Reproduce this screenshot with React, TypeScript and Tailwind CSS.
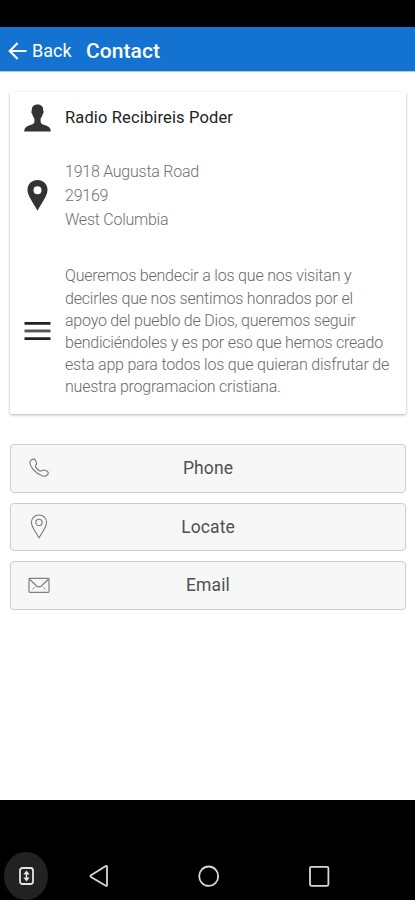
import React from "react";

const about: { text: string; spacing: string }[] = [
  { text: "Queremos bendecir a los que nos visitan y", spacing: "tracking-[-0.2px]" },
  { text: "decirles que nos sentimos honrados por el", spacing: "tracking-[-0.2px]" },
  { text: "apoyo del pueblo de Dios, queremos seguir", spacing: "tracking-[-0.22px]" },
  { text: "bendiciéndoles y es por eso que hemos creado", spacing: "tracking-[-0.22px]" },
  { text: "esta app para todos los que quieran disfrutar de", spacing: "tracking-[-0.2px]" },
  { text: "nuestra programacion cristiana.", spacing: "tracking-[-0.22px]" },
];

function PersonIcon() {
  return (
    <svg className="h-7 w-[27px]" viewBox="0 0 27 28" fill="#333335">
      <path d="M13.5 0.5C9.4 0.5 7.6 3 7.8 6.5c-.7.4-.5 3.1.6 3.8.3 2.1 1.2 3.4 2 4.2v3.7c-.6 2.2-3.2 2.5-6 3.5C1.300 22.800.300 24.500.2 27.500h26.600c-.1-3-1.100-4.700-4.200-5.800-2.800-1-5.400-1.300-6-3.500v-3.700c.8-.8 1.700-2.100 2-4.200 1.100-.7 1.300-3.400.6-3.800.2-3.500-1.600-6-5.700-6z" />
    </svg>
  );
}

function PinIcon() {
  return (
    <svg className="h-[31px] w-[21px]" viewBox="0 0 21 31">
      <path fillRule="evenodd" fill="#333335" d="M10.500 0C4.700 0 .5 4.300.5 9.700c0 6.300 6.200 13.600 10 21.100 3.800-7.500 10-14.800 10-21.100C20.500 4.300 16.300 0 10.500 0zm0 6.200a4 4 0 1 1 0 8 4 4 0 0 1 0-8z" />
    </svg>
  );
}

function MenuIcon() {
  return (
    <svg className="h-[18px] w-[27px]" viewBox="0 0 27 18">
      <path fill="#222224" d="M.5 0h26v2.700H.5zM.5 15.200h26v2.700H.5z" />
      <path fill="#555558" d="M.5 7.500h26v2.900H.5z" />
    </svg>
  );
}

function PhoneIcon() {
  return (
    <svg className="h-5 w-5" viewBox="0 0 20 20" fill="none" stroke="#77777a" strokeWidth="1.100" strokeLinejoin="round">
      <path d="M2.200 2.100C3.600.8 5.500.8 6.300 2.200l.9 1.800c.6 1.200.4 2.100-.3 2.900-.7.800-.6 1.400-.1 2.200.9 1.500 2.100 2.700 3.600 3.600.8.500 1.500.6 2.200 0 .8-.7 1.600-.8 2.600-.5l2.600.9c1.500.6 1.800 2 1 3.300-1.100 1.700-3 2.200-5.200 1.500C10 16.600 6.700 14.500 4 11.300 2.300 9.200 1.200 7 .9 5 .8 3.700 1.200 2.900 2.200 2.100z" />
    </svg>
  );
}

function LocateIcon() {
  return (
    <svg className="h-[25px] w-[18px]" viewBox="0 0 18 25" fill="none" stroke="#77777a" strokeWidth="1.100">
      <path d="M9 1C4.600 1 1.400 4.300 1.400 8.500c0 4.500 4.600 10 7.600 15.300 3-5.300 7.600-10.800 7.600-15.300C16.600 4.300 13.400 1 9 1z" />
      <circle cx="9" cy="8.400" r="3.100" />
    </svg>
  );
}

function EmailIcon() {
  return (
    <svg className="h-[17px] w-[22px]" viewBox="0 0 22 17" fill="none" stroke="#808083" strokeWidth="1.200">
      <rect x="1" y="1.300" width="20" height="14" rx="0.800" />
      <path d="M1.500 2.200 8.700 9c1.400 1.200 3.200 1.200 4.600 0L20.500 2.200" />
      <path d="M4.500 12.500 7.300 9.500M17.500 12.500 14.700 9.500" strokeWidth="0.800" />
    </svg>
  );
}

function ActionButton({ label, icon }: { label: string; icon: React.ReactNode }) {
  return (
    <button className="grid h-[48.5px] w-full grid-cols-[56px_1fr_56px] items-center rounded-[4px] border border-[#cdcdcd] bg-[#f7f7f7] text-[17.5px] font-normal text-[#505050]">
      <span className="flex justify-center">{icon}</span>
      <span className="tracking-[0.1px]">{label}</span>
    </button>
  );
}

export default function App() {
  return (
    <div className="flex h-[900px] w-[415px] flex-col overflow-hidden bg-white font-['Roboto',sans-serif]">
      <div className="h-[27px] shrink-0 bg-black" />
      <header className="flex h-[45px] shrink-0 items-center border-b border-[#a9c9ee] bg-[#1472d0] pl-2 pt-[4px] text-white">
        <svg className="h-5 w-5" viewBox="0 0 20 20" fill="none" stroke="white" strokeWidth="2.200">
          <path d="M18.500 10H2M9.600 2 1.800 10l7.800 8" />
        </svg>
        <span className="ml-1 w-[54px] text-[18px] leading-6">Back</span>
        <h1 className="text-[21px] font-medium leading-6 tracking-[0.05px]">Contact</h1>
      </header>

      <main className="flex h-[728px] shrink-0 flex-col px-[10px] pr-[9px] pt-5">
        <section className="h-[322px] rounded-[2px] bg-white shadow-[0_1px_3px_rgba(0,0,0,0.3)]">
          <div className="flex h-[51px] items-center pl-[14px]">
            <PersonIcon />
            <span className="ml-[14px] text-[16.5px] leading-6 tracking-[0.14px] text-[#222]">Radio Recibireis Poder</span>
          </div>
          <div className="mt-4 flex h-[72px] items-center pl-[17px]">
            <PinIcon />
            <div className="ml-[17px] pt-[2px] text-[16px] font-light leading-6 tracking-[-0.25px] text-[#707070]">
              <p>1918 Augusta Road</p>
              <p>29169</p>
              <p>West Columbia</p>
            </div>
          </div>
          <div className="mt-[33px] flex h-[134px] items-center pl-[14px]">
            <MenuIcon />
            <div className="ml-[14px] pt-[2px] text-[16px] font-light leading-[22.200px] text-[#6a6a6a]">
              {about.map((line) => (
                <p key={line.text} className={`whitespace-nowrap ${line.spacing}`}>{line.text}</p>
              ))}
            </div>
          </div>
        </section>

        <nav className="mt-[30px] flex flex-col gap-[10px]">
          <ActionButton label="Phone" icon={<PhoneIcon />} />
          <ActionButton label="Locate" icon={<LocateIcon />} />
          <ActionButton label="Email" icon={<EmailIcon />} />
        </nav>
      </main>

      <footer className="flex h-[100px] shrink-0 items-end bg-black pl-1">
        <div className="flex h-[48px] w-[44px] items-center justify-center rounded-[50%] bg-[#222]">
          <svg className="h-[18px] w-[15px]" viewBox="0 0 15 18" fill="none" stroke="#e4e4e4" strokeWidth="1.800">
            <rect x="1" y="1" width="13" height="16" rx="2.500" />
            <path d="M7.500 5v8" strokeWidth="1.500" />
            <path d="M4.300 7.500 7.500 3.600l3.200 3.900zM4.300 10.500l3.200 3.900 3.200-3.900z" fill="#e4e4e4" stroke="none" />
          </svg>
        </div>
        <svg className="mb-3 ml-[41px] h-6 w-5" viewBox="0 0 20 24" fill="none" stroke="#d8d8d8" strokeWidth="1.800" strokeLinejoin="round">
          <path d="M18 2.600v18.600c0 .7-.6.9-1.200.6L2 13c-.8-.5-.8-1.300 0-1.800L16.800 2c.6-.3 1.200 0 1.200.6z" />
        </svg>
        <svg className="mb-3 ml-[89px] h-6 w-[22px]" viewBox="0 0 22 24" fill="none" stroke="#d8d8d8" strokeWidth="1.800">
          <ellipse cx="10.700" cy="12.200" rx="9.500" ry="9.700" />
        </svg>
        <svg className="mb-3 ml-[88px] h-6 w-[22px]" viewBox="0 0 22 24" fill="none" stroke="#d8d8d8" strokeWidth="1.800">
          <rect x="2" y="2.800" width="18.400" height="19" rx="1.500" />
        </svg>
      </footer>
    </div>
  );
}
